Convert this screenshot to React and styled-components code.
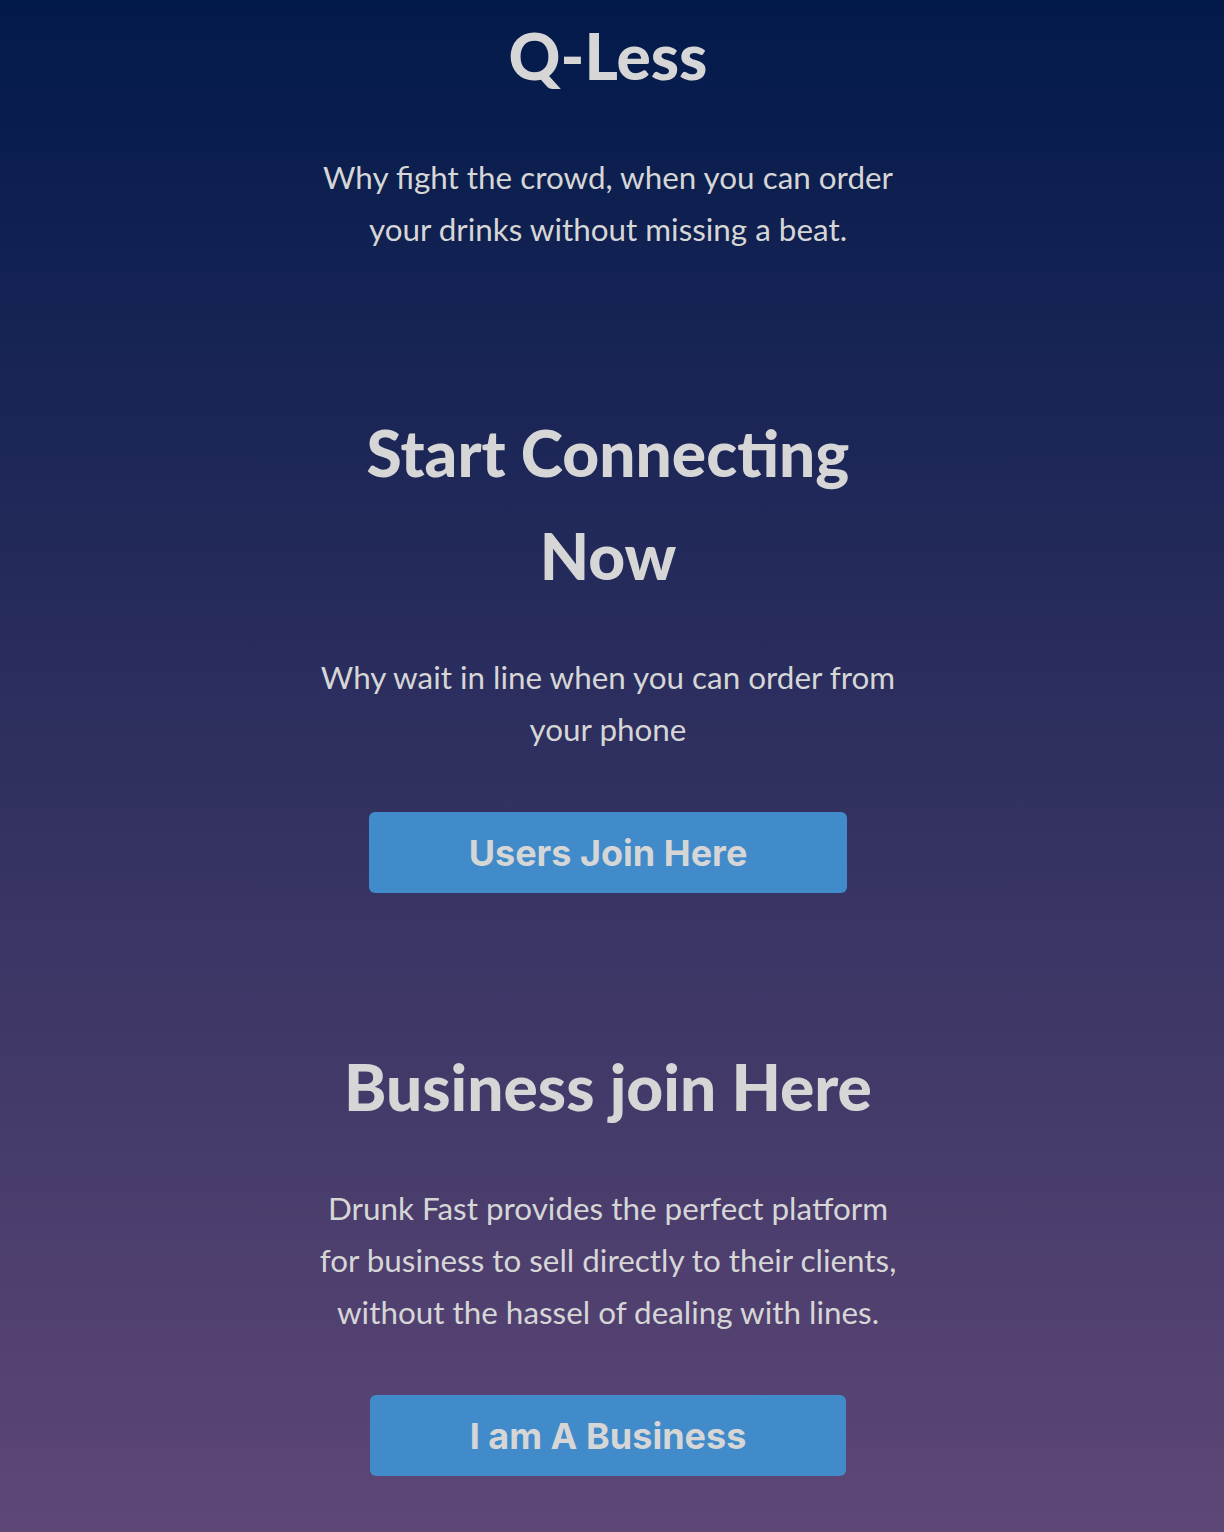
import styled, { createGlobalStyle } from 'styled-components'

const GlobalStyle = createGlobalStyle`
  html, body {
    margin: 0;
    padding: 0;
  }

  body {
    font-family: 'Lato', 'Noto Sans', sans-serif;
    color: #d6d6d6;
  }
`

const sections = [
  {
    id: 'intro',
    title: 'Q-Less',
    text: 'Why fight the crowd, when you can order your drinks without missing a beat.',
  },
  {
    id: 'users',
    title: 'Start Connecting Now',
    text: 'Why wait in line when you can order from your phone',
    action: 'Users Join Here',
  },
  {
    id: 'business',
    title: 'Business join Here',
    text: 'Drunk Fast provides the perfect platform for business to sell directly to their clients, without the hassel of dealing with lines.',
    action: 'I am A Business',
  },
]

function App() {
  return (
    <>
      <GlobalStyle />
      <Page>
        {sections.map(section =>
          <Section key={section.id}>
            <Title>{section.title}</Title>
            <Text>{section.text}</Text>
            {section.action && <Button type="button">{section.action}</Button>}
          </Section>
        )}
      </Page>
    </>
  )
}

const Page = styled.main`
  min-height: 1532px;
  box-sizing: border-box;
  padding: 4px 8px 30px 0;
  display: flex;
  flex-direction: column;
  align-items: center;
  gap: 146px;
  background: linear-gradient(to bottom, #021a4a 0%, #2b2e5e 45%, #5e4776 100%);
`

const Section = styled.section`
  width: 600px;
  display: flex;
  flex-direction: column;
  align-items: center;
  text-align: center;

  & + & + & {
    margin-top: -4px;
  }
`

const Title = styled.h1`
  margin: 0;
  font-size: 64px;
  line-height: 103px;
  font-weight: 900;
`

const Text = styled.p`
  margin: 44px 0 0;
  font-size: 31.4px;
  line-height: 52px;
  font-weight: 400;
`

const Button = styled.button`
  margin-top: 57px;
  height: 81px;
  padding: 0 100px;
  border: none;
  border-radius: 6px;
  background: #418bca;
  color: #d6d6d6;
  font-family: 'Inter', 'Roboto', sans-serif;
  font-size: 36px;
  font-weight: 700;
  cursor: pointer;
`

export default App
